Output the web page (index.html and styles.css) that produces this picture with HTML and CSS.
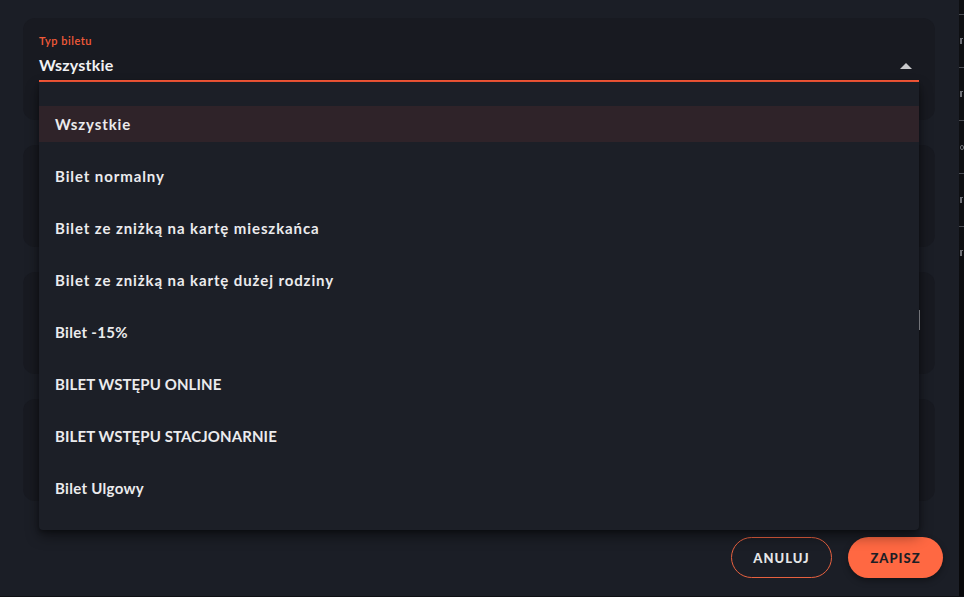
FILE: index.html
```html
<!DOCTYPE html>
<html lang="pl">
<head>
<meta charset="utf-8">
<link rel="stylesheet" href="styles.css">
</head>
<body>
<div class="page">
  <main class="dialog">
    <section class="card">
      <div class="field">
        <div class="label">Typ biletu</div>
        <div class="value">Wszystkie
          <svg class="caret" width="12" height="6" viewBox="0 0 12 6"><path d="M0 6 L6 0 L12 6 Z" fill="#c9c9cc"/></svg>
        </div>
        <ul class="menu">
          <li class="item active">Wszystkie</li>
          <li class="item">Bilet normalny</li>
          <li class="item">Bilet ze zniżką na kartę mieszkańca</li>
          <li class="item">Bilet ze zniżką na kartę dużej rodziny</li>
          <li class="item tight">Bilet -15%</li>
          <li class="item caps">BILET WSTĘPU ONLINE</li>
          <li class="item caps">BILET WSTĘPU STACJONARNIE</li>
          <li class="item tight">Bilet Ulgowy</li>
        </ul>
      </div>
    </section>
    <section class="card"></section>
    <section class="card"><span class="cursor"></span></section>
    <section class="card"></section>
    <div class="actions">
      <button class="btn btn-outline">ANULUJ</button>
      <button class="btn btn-primary">ZAPISZ</button>
    </div>
  </main>
  <aside class="strip">
    <div class="row"><i class="mark"></i></div>
    <div class="row"><i class="mark"></i></div>
    <div class="row"><i class="mark round"></i></div>
    <div class="row"><i class="mark"></i></div>
    <div class="row"><i class="mark"></i></div>
  </aside>
</div>
</body>
</html>
```

FILE: styles.css
```css
* { box-sizing: border-box; }
html, body { margin: 0; padding: 0; }
body {
  width: 964px;
  height: 597px;
  overflow: hidden;
  background: #1b1e26;
  font-family: "Lato", "Noto Sans", sans-serif;
  color: #ececee;
}
.page {
  display: flex;
  height: 597px;
  border-bottom: 1px solid #0f1014;
}
.dialog {
  width: 959px;
  padding: 18px 16px 0 23px;
  display: flex;
  flex-direction: column;
  gap: 25px;
}
.card {
  position: relative;
  height: 102px;
  margin-right: 8px;
  background: #181a21;
  border-radius: 12px;
  padding: 16px 16px 0 16px;
}
.card:first-child { z-index: 2; }
.field { position: relative; }
.label {
  font-size: 11px;
  line-height: 14px;
  color: #f35a39;
  font-weight: 600;
  letter-spacing: 0.5px;
}
.value {
  position: relative;
  margin-top: 6px;
  font-size: 16px;
  line-height: 22px;
  font-weight: 700;
  color: #f1f1f3;
  padding-bottom: 4px;
  border-bottom: 2px solid #ff5b3a;
  letter-spacing: 0.2px;
}
.caret {
  position: absolute;
  right: 7px;
  top: 9px;
}
.menu {
  position: absolute;
  top: 100%;
  left: 0;
  right: 0;
  margin: 0;
  list-style: none;
  padding: 24px 0 24px 0;
  background: #1c1f27;
  border-radius: 0 0 4px 4px;
  box-shadow: 0 6px 14px rgba(0,0,0,0.45), 0 2px 4px rgba(0,0,0,0.3);
  display: flex;
  flex-direction: column;
  gap: 16px;
}
.item {
  height: 36px;
  display: flex;
  align-items: center;
  padding-left: 16px;
  font-size: 15px;
  font-weight: 700;
  letter-spacing: 0.9px;
  color: #ebebed;
}
.item.tight { letter-spacing: 0.3px; }
.item.caps { letter-spacing: 0.1px; }
.item.active { background: #2f2329; }
.cursor {
  position: absolute;
  left: 896px;
  top: 38px;
  width: 1px;
  height: 20px;
  background: #a7a9b0;
}
.actions {
  display: flex;
  justify-content: flex-end;
  gap: 16px;
  margin-top: 11px;
}
.btn {
  height: 41px;
  border-radius: 21px;
  font-family: "Lato", sans-serif;
  font-weight: 900;
  font-size: 13px;
  letter-spacing: 1px;
  cursor: pointer;
}
.btn-outline {
  width: 101px;
  background: transparent;
  border: 1px solid #e8613f;
  color: #e6e6e8;
}
.btn-primary {
  width: 95px;
  background: #ff6842;
  border: none;
  color: #1d1e25;
  box-shadow: 0 3px 6px rgba(0,0,0,0.35);
}
.strip {
  width: 5px;
  background: linear-gradient(#0e0f12 0, #0e0f12 230px, #08080a 400px);
  padding-top: 14px;
  overflow: hidden;
}
.row {
  height: 53px;
  border-top: 1px solid #4a4c52;
  display: flex;
  align-items: center;
}
.mark {
  display: block;
  width: 3px;
  height: 6px;
  margin-left: 1px;
  border-left: 2px solid #6d6f75;
  border-top: 1px solid #6d6f75;
}
.mark.round {
  width: 4px;
  height: 5px;
  border: 1px solid #6d6f75;
  border-radius: 2px;
}
```
